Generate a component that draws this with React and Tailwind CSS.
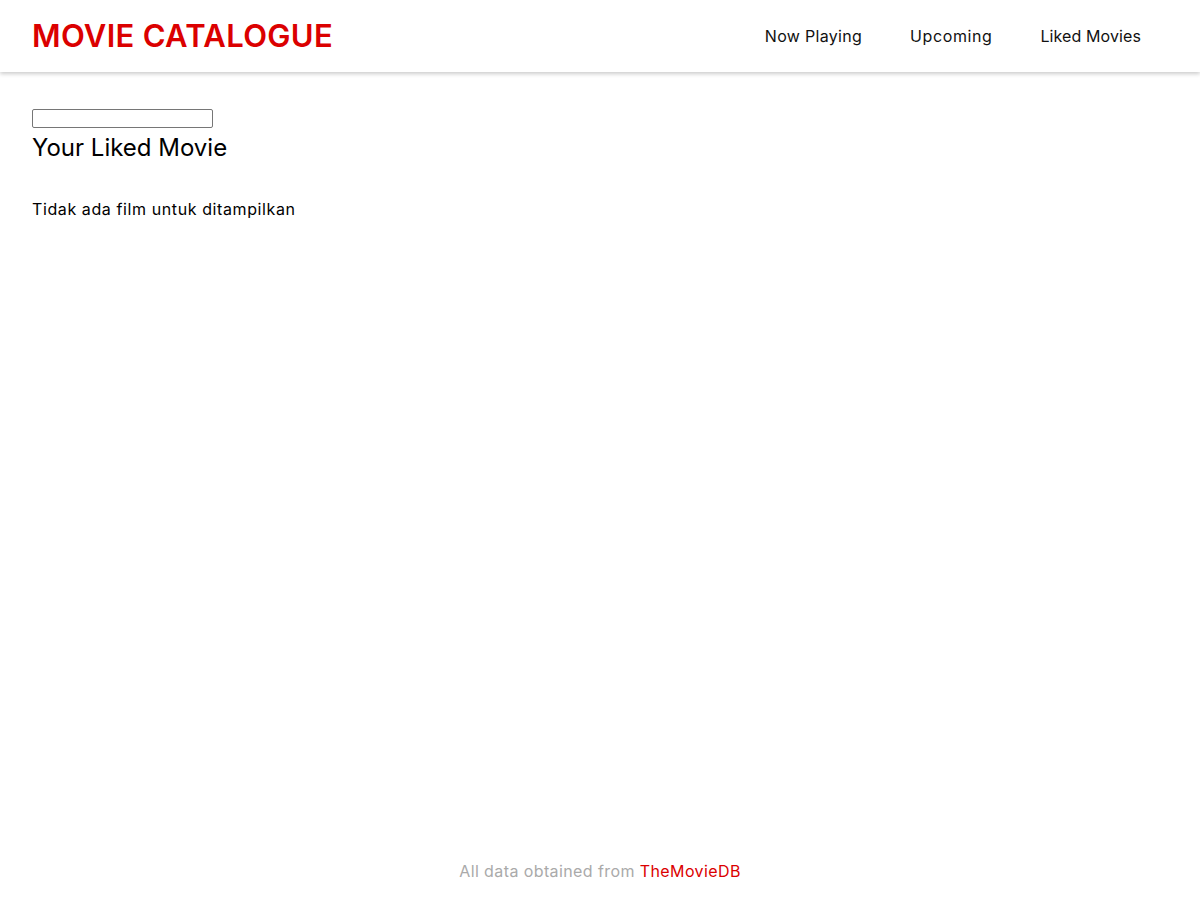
export default function App() {
  const font = { fontFamily: '"Inter", "Open Sans", sans-serif' };
  return (
    <div className="min-h-screen flex flex-col bg-white text-black" style={font}>
      <header className="h-[72px] flex items-center justify-between pl-8 pr-[34px] bg-white shadow-[0_2px_4px_rgba(0,0,0,0.2)]">
        <h1 className="text-[31px] font-semibold text-[#db0000] tracking-[0.3px] mt-[1px]">MOVIE CATALOGUE</h1>
        <nav className="flex items-center">
          <a className="px-6 text-[16px] text-[#111] tracking-[0.3px]">Now Playing</a>
          <a className="px-6 text-[16px] text-[#111] tracking-[0.6px]">Upcoming</a>
          <a className="pl-6 pr-[25px] text-[16px] text-[#111] tracking-[0.1px]">Liked Movies</a>
        </nav>
      </header>
      <main className="flex-1 px-8 pt-[37px]">
        <input className="block w-[181px] h-[19px] border border-[#767676] rounded-[2px]" />
        <h2 className="text-[24px] leading-[38px] mt-[1px]">Your Liked Movie</h2>
        <p className="mt-[30px] text-[16px] leading-[24px] tracking-[0.6px]">Tidak ada film untuk ditampilkan</p>
      </main>
      <footer className="h-[58px] flex items-start justify-center pt-[17px] text-[16px] text-[#aaaaaa] tracking-[0.4px]">
        <span>
          All data obtained from <a className="text-[#db0000]">TheMovieDB</a>
        </span>
      </footer>
    </div>
  );
}
